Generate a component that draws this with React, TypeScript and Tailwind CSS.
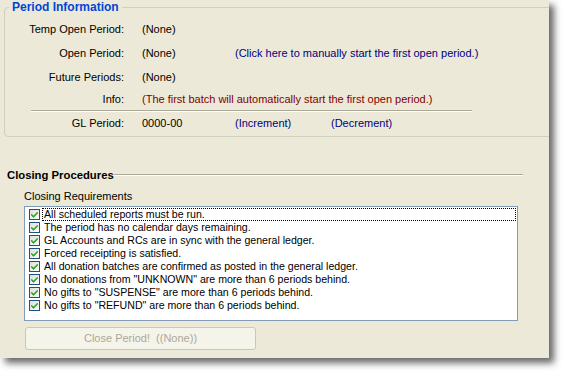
const requirements = [
  "All scheduled reports must be run.",
  "The period has no calendar days remaining.",
  "GL Accounts and RCs are in sync with the general ledger.",
  "Forced receipting is satisfied.",
  "All donation batches are confirmed as posted in the general ledger.",
  'No donations from "UNKNOWN" are more than 6 periods behind.',
  'No gifts to "SUSPENSE" are more than 6 periods behind.',
  'No gifts to "REFUND" are more than 6 periods behind.',
];

function CheckBox() {
  return (
    <svg width="11" height="11" viewBox="0 0 11 11" className="shrink-0">
      <defs>
        <linearGradient id="cbg" x1="0" y1="0" x2="1" y2="1">
          <stop offset="0" stopColor="#dcdcd7" />
          <stop offset="1" stopColor="#ffffff" />
        </linearGradient>
      </defs>
      <rect x="0.5" y="0.5" width="10" height="10" fill="url(#cbg)" stroke="#1c5180" />
      <path d="M2.5 5 L4.5 7 L8.5 3 L8.5 4.5 L4.5 8.5 L2.5 6.5 Z" fill="#21a121" stroke="#21a121" strokeWidth="0.6" />
    </svg>
  );
}

function Row({ label, h, children }: { label: string; h: string; children?: React.ReactNode }) {
  return (
    <div className={`flex items-center ${h}`}>
      <div className="w-[119px] text-right text-black">{label}</div>
      <div className="ml-[18px] flex items-center">{children}</div>
    </div>
  );
}

export default function App() {
  return (
    <div className="min-h-screen bg-white font-['Liberation_Sans',Arial,sans-serif] text-[11px] leading-[13px]">
      <div className="w-[549px] h-[358px] bg-[#ECE9D8] shadow-[5px_5px_7px_rgba(0,0,0,0.6)] overflow-hidden flex flex-col">
        {/* Period Information group */}
        <div className="relative pt-[7px] pl-[4px]">
          <div className="w-[560px] h-[130px] border border-[#D0D0BF] rounded-[4px] pt-[9px]">
            <Row label="Temp Open Period:" h="h-[24px]">
              <span className="w-[93px] text-black">(None)</span>
            </Row>
            <Row label="Open Period:" h="h-[24px]">
              <span className="w-[93px] text-black">(None)</span>
              <span className="text-[#000080] cursor-pointer">
                (Click here to manually start the first open period.)
              </span>
            </Row>
            <Row label="Future Periods:" h="h-[24px]">
              <span className="w-[93px] text-black">(None)</span>
            </Row>
            <Row label="Info:" h="h-[21px]">
              <span className="text-[#800000]">
                (The first batch will automatically start the first open period.)
              </span>
            </Row>
            <div className="ml-[26px] w-[441px] border-t border-t-[#ACA899] border-b border-b-white" />
            <Row label="GL Period:" h="h-[23px]">
              <span className="w-[93px] text-black">0000-00</span>
              <span className="w-[96px] text-[#000080] cursor-pointer">(Increment)</span>
              <span className="text-[#000080] cursor-pointer">(Decrement)</span>
            </Row>
          </div>
          <span className="absolute left-[9px] top-0 px-[3px] bg-[#ECE9D8] text-[#0046D5] font-bold text-[12px] leading-[14px]">
            Period Information
          </span>
        </div>

        {/* Closing Procedures */}
        <div className="mt-[31px] flex items-center h-[14px] pl-[7px] pr-[26px]">
          <span className="font-bold text-[11.3px] leading-[14px] text-black">Closing Procedures</span>
          <div className="flex-1 mt-[-1px] border-t border-t-[#ACA899] border-b border-b-white" />
        </div>

        <div className="mt-[7px] ml-[24px] h-[14px] flex items-center text-black">Closing Requirements</div>

        <div className="mt-[3px] ml-[24px] w-[494px] h-[115px] border border-[#7F9DB9] bg-white pt-[1px] text-[10.6px]">
          {requirements.map((r, i) => (
            <div key={r} className="flex items-center h-[13px] pl-[4px] pr-[1px]">
              <CheckBox />
              <div
                className={`ml-[2px] flex-1 h-[13px] pl-[1px] flex items-center text-black whitespace-nowrap border ${
                  i === 0 ? "border-dotted border-black" : "border-transparent"
                }`}
              >
                {r}
              </div>
            </div>
          ))}
        </div>

        <button
          type="button"
          disabled
          className="mt-[6px] ml-[25px] w-[231px] h-[23px] rounded-[3px] border border-[#C9C7BA] bg-[#F5F4EA] text-[#ACA899] whitespace-pre flex items-center justify-center"
        >
          {"Close Period!  ((None))"}
        </button>
      </div>
    </div>
  );
}
